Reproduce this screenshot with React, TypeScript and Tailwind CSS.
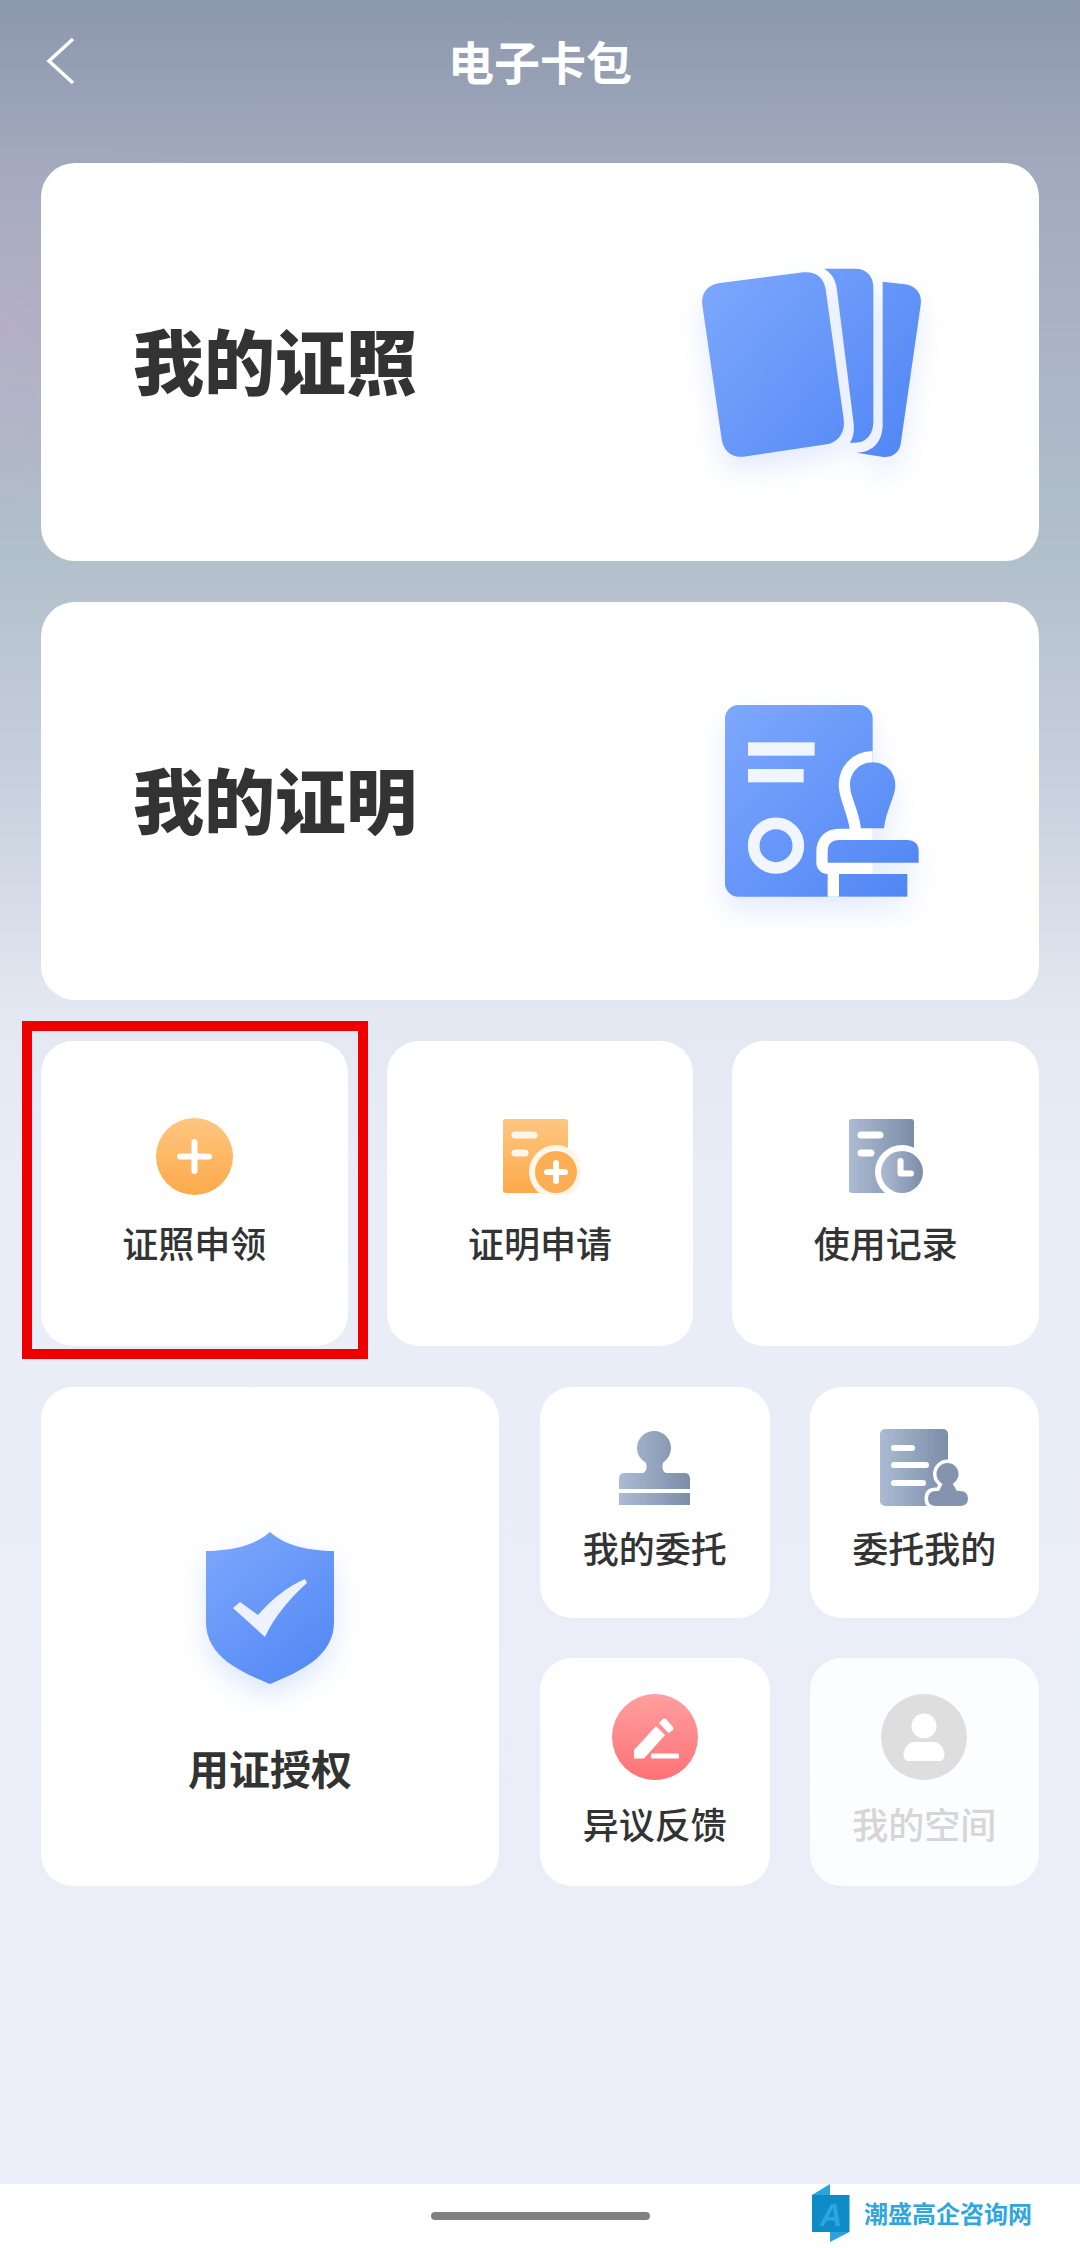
import React from 'react';

const Blue = ({ id, x1, y1, x2, y2 }: { id: string; x1: number; y1: number; x2: number; y2: number }) => (
  <linearGradient id={id} gradientUnits="userSpaceOnUse" x1={x1} y1={y1} x2={x2} y2={y2}>
    <stop offset="0" stopColor="#7ea8fd" />
    <stop offset="1" stopColor="#4f85f4" />
  </linearGradient>
);

const Slate = ({ id }: { id: string }) => (
  <linearGradient id={id} x1="0" y1="0" x2="1" y2="0">
    <stop offset="0" stopColor="#abbbd3" />
    <stop offset="1" stopColor="#7c8da8" />
  </linearGradient>
);

const Orange = ({ id }: { id: string }) => (
  <linearGradient id={id} x1="0" y1="0" x2="0" y2="1">
    <stop offset="0" stopColor="#fdc680" />
    <stop offset="1" stopColor="#fdaa4b" />
  </linearGradient>
);

const CardsIcon = () => (
  <svg width="300" height="280" viewBox="0 0 900 840" className="mt-[17px] drop-shadow-[0_14px_14px_rgba(79,133,244,0.16)]">
    <defs>
      <Blue id="cards" x1={130} y1={120} x2={780} y2={680} />
    </defs>
    <path fill="url(#cards)" d="M180 156 L430 124 C470 120 492 142 497 175 L551 565 C556 605 535 633 500 640 L250 677 C215 681 190 660 185 625 L127 222 C122 185 145 160 180 156 Z" />
    <path fill="url(#cards)" d="M492 113 L585 113 C620 113 640 135 640 170 L640 570 C640 610 620 635 585 635 L570 635 C583 615 583 590 580 570 L530 170 C525 140 512 125 492 113 Z" />
    <path fill="url(#cards)" d="M668 152 L735 160 C770 165 787 190 782 222 L722 640 C716 668 695 680 670 678 L590 665 C640 665 668 630 668 580 Z" />
  </svg>
);

const CertIcon = () => (
  <svg width="280" height="260" viewBox="0 0 840 780" className="mt-[17px] drop-shadow-[0_14px_14px_rgba(79,133,244,0.16)]">
    <defs>
      <Blue id="cert" x1={135} y1={75} x2={716} y2={650} />
      <clipPath id="certdoc">
        <rect x="135" y="75" width="443" height="575" rx="40" />
      </clipPath>
    </defs>
    <rect x="135" y="75" width="443" height="575" rx="40" fill="url(#cert)" />
    <rect x="204" y="187" width="200" height="40" fill="#f1f5fe" />
    <rect x="204" y="267" width="167" height="40" fill="#f1f5fe" />
    <circle cx="288" cy="497" r="67" fill="none" stroke="#f1f5fe" strokeWidth="35" />
    <g clipPath="url(#certdoc)" fill="#ffffff" stroke="#ffffff" strokeWidth="68" strokeLinejoin="round">
      <path d="M578 247 C620 247 646 280 646 315 C646 350 620 385 612 445 L543 445 C535 385 510 350 510 315 C510 280 536 247 578 247 Z" />
      <path d="M443 548 L443 515 Q443 480 478 480 L680 480 Q716 480 716 515 L716 548 Z" />
      <path d="M477 582 H682 V650 H477 Z" />
    </g>
    <path fill="url(#cert)" d="M578 247 C620 247 646 280 646 315 C646 350 620 385 612 445 L543 445 C535 385 510 350 510 315 C510 280 536 247 578 247 Z" />
    <path fill="url(#cert)" d="M443 548 L443 515 Q443 480 478 480 L680 480 Q716 480 716 515 L716 548 Z" />
    <rect x="477" y="582" width="205" height="68" fill="url(#cert)" />
  </svg>
);

const PlusIcon = () => (
  <svg width="77" height="77" viewBox="0 0 77 77">
    <defs>
      <Orange id="plus" />
    </defs>
    <circle cx="38.5" cy="38.5" r="38.5" fill="url(#plus)" />
    <path d="M24 38.5 H53 M38.5 24 V53" stroke="#fff" strokeWidth="6" strokeLinecap="round" />
  </svg>
);

const DocPlusIcon = () => (
  <svg width="80" height="77" viewBox="0 0 80 77">
    <defs>
      <Orange id="docplus" />
    </defs>
    <rect x="3" y="1" width="65" height="74" rx="3" fill="url(#docplus)" />
    <path d="M15 17 H34 M15 35 H25" stroke="#fff6ea" strokeWidth="7" strokeLinecap="round" />
    <circle cx="56" cy="54" r="27" fill="#fff6ea" />
    <circle cx="56" cy="54" r="21" fill="#fdae55" />
    <path d="M47 54 H65 M56 45 V63" stroke="#fff" strokeWidth="6" strokeLinecap="round" />
  </svg>
);

const DocClockIcon = () => (
  <svg width="80" height="77" viewBox="0 0 80 77">
    <defs>
      <Slate id="docclock" />
    </defs>
    <rect x="3" y="1" width="65" height="74" rx="3" fill="url(#docclock)" />
    <path d="M15 17 H34 M15 35 H25" stroke="#fff" strokeWidth="7" strokeLinecap="round" />
    <circle cx="56" cy="54" r="27" fill="#fff" />
    <circle cx="56" cy="54" r="21" fill="url(#docclock)" />
    <path d="M54.5 43 V55.5 H65" fill="none" stroke="#fff" strokeWidth="6" strokeLinecap="round" strokeLinejoin="round" />
  </svg>
);

const StampIcon = () => (
  <svg width="88" height="78" viewBox="0 0 88 78">
    <defs>
      <Slate id="stamp" />
    </defs>
    <path fill="url(#stamp)" d="M43 2 C53 2 60 10 60 19 C60 27 55 31 52 34 C51 38 51 42 55 44 H74 Q79 44 79 50 V60 H8 V50 Q8 44 13 44 H32 C36 42 36 38 35 34 C31 31 26 27 26 19 C26 10 33 2 43 2 Z" />
    <rect x="8" y="64" width="71" height="12" fill="url(#stamp)" />
  </svg>
);

const DocPersonIcon = () => (
  <svg width="88" height="78" viewBox="0 0 88 78">
    <defs>
      <Slate id="docperson" />
    </defs>
    <rect x="0" y="0" width="68" height="77" rx="5" fill="url(#docperson)" />
    <path d="M14 19 H32 M14 36 H46 M14 54 H43" stroke="#fff" strokeWidth="6" strokeLinecap="round" />
    <g fill="#fff" stroke="#fff" strokeWidth="7" strokeLinejoin="round">
      <circle cx="67.5" cy="45" r="11" />
      <path d="M64 52 L59 62 H56 Q48 62 48 69.500 Q48 77 56 77 H80 Q88 77 88 69.500 Q88 62 80 62 H77 L71 52 Z" />
    </g>
    <circle cx="67.5" cy="45" r="11" fill="#8494ae" />
    <path fill="#8494ae" d="M64 52 L59 62 H56 Q48 62 48 69.500 Q48 77 56 77 H80 Q88 77 88 69.500 Q88 62 80 62 H77 L71 52 Z" />
  </svg>
);

const ShieldIcon = () => (
  <svg width="128" height="152" viewBox="0 0 128 152" className="overflow-visible drop-shadow-[0_12px_14px_rgba(79,133,244,0.2)]">
    <defs>
      <Blue id="shield" x1={0} y1={0} x2={128} y2={152} />
    </defs>
    <path fill="url(#shield)" d="M64 0 C50 13 25 19 0 19 L0 90 C0 125 35 140 64 152 C93 140 128 125 128 90 L128 19 C103 19 78 13 64 0 Z" />
    <path fill="#edf2fe" d="M27 76 L34 70 L52 83 C65 68 82 54 99 47 L101 51 C85 65 68 85 59 105 Z" />
  </svg>
);

const PenIcon = () => (
  <svg width="86" height="86" viewBox="0 0 86 86">
    <defs>
      <linearGradient id="pen" x1="0" y1="0" x2="0" y2="1">
        <stop offset="0" stopColor="#ff9f9f" />
        <stop offset="1" stopColor="#fd7276" />
      </linearGradient>
    </defs>
    <circle cx="43" cy="43" r="43" fill="url(#pen)" />
    <path fill="#fff" d="M22 56 L44 32 L53 41 L32 64.5 H22 Z" />
    <path fill="#fff" d="M47 29 L51 25 Q52.5 24 54 25 L61 33 Q62 35 61 36 L56.5 39 Z" />
    <rect x="39" y="59.5" width="28" height="5" rx="1" fill="#fff" />
  </svg>
);

const PersonIcon = () => (
  <svg width="86" height="86" viewBox="0 0 86 86">
    <circle cx="43" cy="43" r="43" fill="#dedede" />
    <circle cx="43" cy="32" r="12.5" fill="#fff" />
    <path fill="#fff" d="M33 48 H53 C59 48 63.500 55 63.500 61 C63.500 65 61 67 58 67 H28 C25 67 22.500 65 22.500 61 C22.500 55 27 48 33 48 Z" />
  </svg>
);

const BigCard = ({ title, children }: { title: string; children: React.ReactNode }) => (
  <div className="h-[398px] bg-white rounded-[34px] flex items-center justify-between pl-[92px] pr-[79px]">
    <span className="mb-[7px] text-[71px] leading-none font-black text-[#333333]">{title}</span>
    {children}
  </div>
);

const Label = ({ children, muted, className }: { children: string; muted?: boolean; className: string }) => (
  <span className={`text-[36px] leading-[48px] font-medium ${muted ? 'text-[#d6d6d6]' : 'text-[#333333]'} ${className}`}>{children}</span>
);

export default function App() {
  return (
    <div
      className="relative w-[1080px] h-[2248px] flex flex-col overflow-hidden font-['Noto_Sans_CJK_SC','Noto_Sans',sans-serif] bg-[radial-gradient(ellipse_320px_200px_at_0%_325px,rgba(196,170,196,0.42),transparent),linear-gradient(180deg,#8c98ad_0px,#a2aabd_170px,#a9b3c5_330px,#b2c0cb_560px,#c9d2de_800px,#e2e7f1_1000px,#e9edf8_1180px,#ebeef9_2184px)]"
    >
      <header className="h-[124px] shrink-0 grid grid-cols-[1fr_auto_1fr] items-center">
        <svg width="30" height="48" viewBox="0 0 30 48" className="ml-[46px] mt-[-2px]">
          <path d="M27 2 L3 24 L27 46" fill="none" stroke="#ffffff" strokeWidth="3.500" />
        </svg>
        <h1 className="mb-[5px] text-[46px] leading-none font-bold text-white">电子卡包</h1>
        <div />
      </header>

      <div className="mt-[39px] px-[41px] flex flex-col gap-[41px]">
        <BigCard title="我的证照">
          <CardsIcon />
        </BigCard>
        <BigCard title="我的证明">
          <CertIcon />
        </BigCard>

        <div className="grid grid-cols-3 gap-[39px]">
          <div className="relative h-[305px] bg-white rounded-[32px] flex flex-col items-center pt-[77px]">
            <PlusIcon />
            <Label className="mt-[23px]">证照申领</Label>
            <div className="absolute left-[-19px] right-[-20px] top-[-20px] bottom-[-13px] border-[10px] border-[#ee0000]" />
          </div>
          <div className="h-[305px] bg-white rounded-[32px] flex flex-col items-center pt-[77px]">
            <DocPlusIcon />
            <Label className="mt-[23px]">证明申请</Label>
          </div>
          <div className="h-[305px] bg-white rounded-[32px] flex flex-col items-center pt-[77px]">
            <DocClockIcon />
            <Label className="mt-[23px]">使用记录</Label>
          </div>
        </div>

        <div className="flex gap-[41px]">
          <div className="w-[458px] h-[499px] bg-white rounded-[32px] flex flex-col items-center pt-[145px]">
            <ShieldIcon />
            <span className="mt-[56px] text-[41px] leading-[54px] font-bold text-[#333333]">用证授权</span>
          </div>
          <div className="flex-1 grid grid-cols-2 gap-x-[40px] gap-y-[40px]">
            <div className="h-[231px] bg-white rounded-[32px] flex flex-col items-center pt-[42px]">
              <StampIcon />
              <Label className="mt-[16px]">我的委托</Label>
            </div>
            <div className="h-[231px] bg-white rounded-[32px] flex flex-col items-center pt-[42px]">
              <DocPersonIcon />
              <Label className="mt-[16px]">委托我的</Label>
            </div>
            <div className="h-[228px] bg-white rounded-[32px] flex flex-col items-center pt-[36px]">
              <PenIcon />
              <Label className="mt-[19px]">异议反馈</Label>
            </div>
            <div className="h-[228px] bg-[#fcfdff] rounded-[32px] flex flex-col items-center pt-[36px]">
              <PersonIcon />
              <Label muted className="mt-[19px]">我的空间</Label>
            </div>
          </div>
        </div>
      </div>

      <div className="mt-auto h-[64px] shrink-0 bg-white flex items-center justify-center">
        <div className="w-[219px] h-[8px] rounded-full bg-[#808080]" />
      </div>

      <div className="absolute left-[812px] top-[2184px] flex items-center gap-[14px]">
        <svg width="38" height="58" viewBox="0 0 38 58">
          <path d="M0 11 L18 0 V11 Z M18 48 H37.500 L18 58 Z" fill="#2aa3de" />
          <rect x="0" y="11" width="37.500" height="37" fill="#0d8cc8" />
          <text x="19" y="42" textAnchor="middle" fontSize="31" fontWeight="700" fontStyle="italic" fontFamily="'Liberation Sans',sans-serif" fill="#2da6e0">A</text>
        </svg>
        <span className="text-[24px] leading-none font-bold text-[#2fa6dd]">潮盛高企咨询网</span>
      </div>
    </div>
  );
}
